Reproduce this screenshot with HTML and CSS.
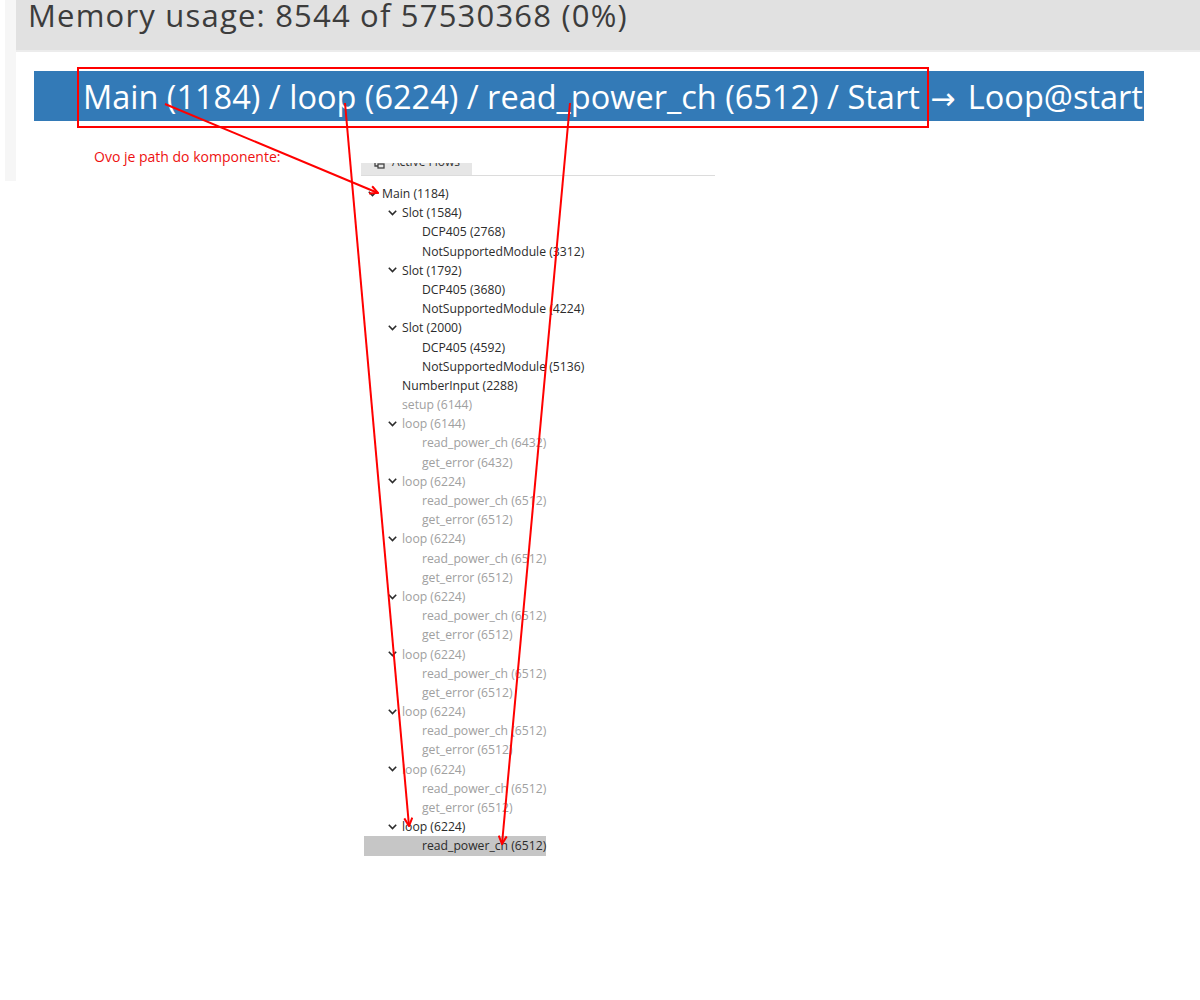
FILE: index.html
```html
<!DOCTYPE html>
<html>
<head>
<meta charset="utf-8">
<link rel="stylesheet" href="styles.css">
</head>
<body>
<div class="page">
  <section class="shot-top">
    <div class="edge"></div>
    <div class="app">
      <div class="mem">Memory usage: 8544 of 57530368 (0%)</div>
      <div class="crumb-wrap">
        <div class="crumb">Main (1184) / loop (6224) / read_power_ch (6512) / Start <span class="arr">→</span> Loop@start</div>
      </div>
    </div>
  </section>

  <section class="lower">
    <p class="note">Ovo je path do komponente:</p>
    <div class="flows">
      <div class="tabs">
        <div class="tab">
          <div class="tab-inner">
            <svg class="tab-icon" width="14" height="14" viewBox="0 0 14 14"><rect x="1" y="1" width="6" height="4" fill="none" stroke="#444" stroke-width="1.3"/><rect x="6" y="9" width="6" height="4" fill="none" stroke="#444" stroke-width="1.3"/><path d="M3 5 V11 H6" fill="none" stroke="#444" stroke-width="1.3"/></svg>
            <span>Active Flows</span>
          </div>
        </div>
      </div>
      <div class="tree">
        <div class="row l0 on"><span class="tog"><svg width="9" height="6" viewBox="0 0 9 6"><path d="M0.8 0.8 L4.5 4.5 L8.2 0.8" fill="none" stroke="#2b2b2b" stroke-width="1.6"/></svg></span>Main (1184)</div>
        <div class="row l1 on"><span class="tog"><svg width="9" height="6" viewBox="0 0 9 6"><path d="M0.8 0.8 L4.5 4.5 L8.2 0.8" fill="none" stroke="#2b2b2b" stroke-width="1.6"/></svg></span>Slot (1584)</div>
        <div class="row l2 on"><span class="tog"></span>DCP405 (2768)</div>
        <div class="row l2 on"><span class="tog"></span>NotSupportedModule (3312)</div>
        <div class="row l1 on"><span class="tog"><svg width="9" height="6" viewBox="0 0 9 6"><path d="M0.8 0.8 L4.5 4.5 L8.2 0.8" fill="none" stroke="#2b2b2b" stroke-width="1.6"/></svg></span>Slot (1792)</div>
        <div class="row l2 on"><span class="tog"></span>DCP405 (3680)</div>
        <div class="row l2 on"><span class="tog"></span>NotSupportedModule (4224)</div>
        <div class="row l1 on"><span class="tog"><svg width="9" height="6" viewBox="0 0 9 6"><path d="M0.8 0.8 L4.5 4.5 L8.2 0.8" fill="none" stroke="#2b2b2b" stroke-width="1.6"/></svg></span>Slot (2000)</div>
        <div class="row l2 on"><span class="tog"></span>DCP405 (4592)</div>
        <div class="row l2 on"><span class="tog"></span>NotSupportedModule (5136)</div>
        <div class="row l1 on"><span class="tog"></span>NumberInput (2288)</div>
        <div class="row l1"><span class="tog"></span>setup (6144)</div>
        <div class="row l1"><span class="tog"><svg width="9" height="6" viewBox="0 0 9 6"><path d="M0.8 0.8 L4.5 4.5 L8.2 0.8" fill="none" stroke="#2b2b2b" stroke-width="1.6"/></svg></span>loop (6144)</div>
        <div class="row l2"><span class="tog"></span>read_power_ch (6432)</div>
        <div class="row l2"><span class="tog"></span>get_error (6432)</div>
        <div class="row l1"><span class="tog"><svg width="9" height="6" viewBox="0 0 9 6"><path d="M0.8 0.8 L4.5 4.5 L8.2 0.8" fill="none" stroke="#2b2b2b" stroke-width="1.6"/></svg></span>loop (6224)</div>
        <div class="row l2"><span class="tog"></span>read_power_ch (6512)</div>
        <div class="row l2"><span class="tog"></span>get_error (6512)</div>
        <div class="row l1"><span class="tog"><svg width="9" height="6" viewBox="0 0 9 6"><path d="M0.8 0.8 L4.5 4.5 L8.2 0.8" fill="none" stroke="#2b2b2b" stroke-width="1.6"/></svg></span>loop (6224)</div>
        <div class="row l2"><span class="tog"></span>read_power_ch (6512)</div>
        <div class="row l2"><span class="tog"></span>get_error (6512)</div>
        <div class="row l1"><span class="tog"><svg width="9" height="6" viewBox="0 0 9 6"><path d="M0.8 0.8 L4.5 4.5 L8.2 0.8" fill="none" stroke="#2b2b2b" stroke-width="1.6"/></svg></span>loop (6224)</div>
        <div class="row l2"><span class="tog"></span>read_power_ch (6512)</div>
        <div class="row l2"><span class="tog"></span>get_error (6512)</div>
        <div class="row l1"><span class="tog"><svg width="9" height="6" viewBox="0 0 9 6"><path d="M0.8 0.8 L4.5 4.5 L8.2 0.8" fill="none" stroke="#2b2b2b" stroke-width="1.6"/></svg></span>loop (6224)</div>
        <div class="row l2"><span class="tog"></span>read_power_ch (6512)</div>
        <div class="row l2"><span class="tog"></span>get_error (6512)</div>
        <div class="row l1"><span class="tog"><svg width="9" height="6" viewBox="0 0 9 6"><path d="M0.8 0.8 L4.5 4.5 L8.2 0.8" fill="none" stroke="#2b2b2b" stroke-width="1.6"/></svg></span>loop (6224)</div>
        <div class="row l2"><span class="tog"></span>read_power_ch (6512)</div>
        <div class="row l2"><span class="tog"></span>get_error (6512)</div>
        <div class="row l1"><span class="tog"><svg width="9" height="6" viewBox="0 0 9 6"><path d="M0.8 0.8 L4.5 4.5 L8.2 0.8" fill="none" stroke="#2b2b2b" stroke-width="1.6"/></svg></span>loop (6224)</div>
        <div class="row l2"><span class="tog"></span>read_power_ch (6512)</div>
        <div class="row l2"><span class="tog"></span>get_error (6512)</div>
        <div class="row l1 on"><span class="tog"><svg width="9" height="6" viewBox="0 0 9 6"><path d="M0.8 0.8 L4.5 4.5 L8.2 0.8" fill="none" stroke="#2b2b2b" stroke-width="1.6"/></svg></span>loop (6224)</div>
        <div class="row l2 on sel"><span class="tog"></span>read_power_ch (6512)</div>
      </div>
    </div>
  </section>

  <div class="callout-box"></div>
  <svg class="arrows" width="1200" height="1000" viewBox="0 0 1200 1000">
    <defs>
      <marker id="ah" markerWidth="10" markerHeight="10" refX="9" refY="5" orient="auto" markerUnits="userSpaceOnUse">
        <path d="M1 1 L9 5 L1 9" fill="none" stroke="#f00" stroke-width="2"/>
      </marker>
    </defs>
    <line x1="165" y1="104" x2="378" y2="193" stroke="#f00" stroke-width="2" marker-end="url(#ah)"/>
    <line x1="345" y1="103" x2="409" y2="826" stroke="#f00" stroke-width="2" marker-end="url(#ah)"/>
    <line x1="570" y1="103" x2="502" y2="844" stroke="#f00" stroke-width="2" marker-end="url(#ah)"/>
  </svg>
</div>
</body>
</html>
```
FILE: styles.css
```css
html, body {
  margin: 0;
  padding: 0;
  background: #ffffff;
}
.page {
  position: relative;
  width: 1200px;
  height: 1000px;
  overflow: hidden;
  font-family: "Open Sans", "Noto Sans", sans-serif;
}
.shot-top {
  display: flex;
  height: 181px;
  padding-left: 5px;
}
.edge {
  width: 11px;
  background: #f6f6f6;
}
.app {
  flex: 1;
  display: flex;
  flex-direction: column;
  background: #ffffff;
}
.mem {
  height: 50px;
  background: #e1e1e1;
  border-bottom: 2px solid #ececec;
  padding-left: 12px;
  font-size: 31px;
  line-height: 30px;
  letter-spacing: 1.2px;
  color: #3c3c3c;
  white-space: nowrap;
}
.crumb-wrap {
  padding: 19px 0 0 18px;
}
.crumb {
  box-sizing: border-box;
  width: 1110px;
  height: 50px;
  padding: 2px 0 0 49px;
  background: #337ab7;
  color: #ffffff;
  font-size: 32.5px;
  line-height: 48px;
  white-space: nowrap;
  overflow: hidden;
}
.arr {
  font-family: "DejaVu Sans", sans-serif;
  font-size: 30px;
  margin: 0 4px 0 2px;
}
.lower {
  display: flex;
  margin-top: -32px;
}
.note {
  margin: 0 0 0 94px;
  width: 267px;
  font-size: 14px;
  line-height: 16px;
  color: #ee1111;
  white-space: nowrap;
}
.flows {
  margin-top: 14px;
  width: 354px;
}
.tabs {
  height: 12px;
  border-bottom: 1px solid #dcdcdc;
  overflow: hidden;
}
.tab {
  width: 111px;
  height: 12px;
  background: #e6e6e6;
  overflow: hidden;
}
.tab-inner {
  display: flex;
  align-items: center;
  margin-top: -9px;
  padding-left: 11px;
  height: 16px;
  font-size: 12px;
  line-height: 16px;
  color: #333;
  white-space: nowrap;
}
.tab-icon {
  margin-right: 6px;
}
.tree {
  padding: 8px 0 0 3px;
  font-size: 12.2px;
  line-height: 19.2px;
  color: #a0a0a0;
}
.row {
  display: flex;
  align-items: center;
  width: fit-content;
  height: 19.2px;
  white-space: nowrap;
}
.row.on {
  color: #2b2b2b;
}
.row.sel {
  background: #c6c6c6;
}
.l0 { padding-left: 4px; }
.l1 { padding-left: 24px; }
.l2 { padding-left: 44px; }
.tog {
  display: flex;
  align-items: center;
  width: 14px;
  height: 19.2px;
}
.callout-box {
  position: absolute;
  left: 77px;
  top: 67px;
  width: 852px;
  height: 61px;
  box-sizing: border-box;
  border: 2px solid #ff0000;
}
.arrows {
  position: absolute;
  left: 0;
  top: 0;
}
```
